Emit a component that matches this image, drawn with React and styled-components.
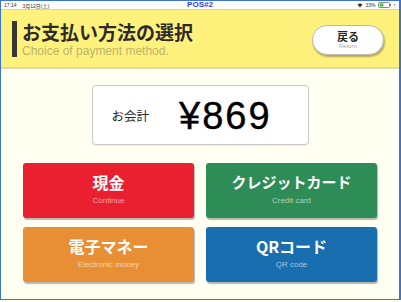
import React from 'react'
import styled, { createGlobalStyle } from 'styled-components'

const GlobalStyle = createGlobalStyle`
  html, body {
    margin: 0;
    padding: 0;
    background: #fffff2;
  }
  body {
    font-family: "Liberation Sans", "Noto Sans CJK JP", sans-serif;
  }
`

const Frame = styled.div`
  width: 398px;
  height: 298px;
  border: 1px solid #3d74d0;
  border-right-width: 2px;
  display: flex;
  flex-direction: column;
  background: #fffff2;
  overflow: hidden;
`

const StatusBar = styled.div`
  height: 8px;
  background: #fff;
  border-bottom: 1px solid #cfcfcf;
  position: relative;
  display: flex;
  align-items: center;
  padding: 0 3px;
  font-size: 5px;
  color: #333;
`

const StatusLeft = styled.div`
  display: flex;
  gap: 6px;
`

const StatusTitle = styled.div`
  position: absolute;
  left: 0;
  right: 0;
  top: 0;
  text-align: center;
  font-size: 8px;
  line-height: 8px;
  font-weight: bold;
  color: #2a3cf5;
`

const StatusRight = styled.div`
  margin-left: auto;
  display: flex;
  align-items: center;
  gap: 2px;
  font-size: 5px;
`

const Header = styled.header`
  height: 57px;
  background: #fff27c;
  border-bottom: 2px solid #dcd8b0;
  display: flex;
  align-items: center;
  padding: 0 15px 0 11px;
`

const Bar = styled.div`
  width: 5px;
  height: 36px;
  background: #3b3434;
  margin-top: 1px;
`

const TitleBlock = styled.div`
  margin-left: 5px;
  display: flex;
  flex-direction: column;
  margin-top: 1px;
`

const Title = styled.h1`
  margin: 0;
  font-family: "Noto Sans CJK JP", sans-serif;
  font-size: 19px;
  line-height: 22px;
  font-weight: 700;
  color: #2e2a2a;
`

const Subtitle = styled.div`
  font-size: 12px;
  line-height: 14px;
  color: #b9b26a;
  margin-top: 1px;
`

const ReturnButton = styled.button`
  margin-left: auto;
  margin-top: 2px;
  width: 72px;
  height: 30px;
  border-radius: 15px;
  border: 1px solid #b9b9b9;
  background: #fff;
  box-shadow: 1px 2px 2px rgba(0, 0, 0, 0.3);
  display: flex;
  flex-direction: column;
  align-items: center;
  justify-content: center;
  padding: 0;
  font-family: "Noto Sans CJK JP", sans-serif;
`

const ReturnLabel = styled.span`
  font-size: 11px;
  line-height: 13px;
  font-weight: 700;
  color: #222;
`

const ReturnSub = styled.span`
  font-family: "Liberation Sans", sans-serif;
  font-size: 6px;
  line-height: 7px;
  color: #aaa;
`

const Main = styled.main`
  display: flex;
  flex-direction: column;
  align-items: center;
  padding-top: 16px;
`

const TotalBox = styled.div`
  box-sizing: border-box;
  width: 217px;
  height: 60px;
  background: #fff;
  border: 1px solid #c9c9c9;
  border-radius: 4px;
  box-shadow: 0 1px 1px rgba(0, 0, 0, 0.08);
  display: flex;
  align-items: center;
  padding-left: 19px;
`

const TotalLabel = styled.span`
  font-family: "Noto Sans CJK JP", sans-serif;
  font-size: 12.5px;
  color: #222;
`

const TotalAmount = styled.span`
  margin-left: 30px;
  font-family: "Liberation Sans", sans-serif;
  font-size: 38px;
  letter-spacing: 2px;
  color: #000;
  margin-top: 2px;
  -webkit-text-stroke: 0.4px #000;
`

const Grid = styled.div`
  margin-top: 18px;
  display: grid;
  grid-template-columns: 171px 171px;
  grid-auto-rows: 55px;
  column-gap: 12px;
  row-gap: 9px;
`

const PayButton = styled.button`
  background: ${(p) => p.color};
  border: none;
  border-radius: 3px;
  box-shadow: 1px 2px 1px rgba(0, 0, 0, 0.28);
  display: flex;
  flex-direction: column;
  align-items: center;
  justify-content: center;
  padding: 0 0 3px;
  color: #fff;
`

const PayLabel = styled.span`
  font-family: "Noto Sans CJK JP", sans-serif;
  font-size: ${(p) => p.size || 16}px;
  line-height: 20px;
  font-weight: 700;
`

const PaySub = styled.span`
  font-family: "Liberation Sans", sans-serif;
  font-size: 8px;
  line-height: 10px;
  margin-top: 4px;
  color: rgba(255, 255, 255, 0.6);
`

const methods = [
  { label: '現金', sub: 'Continue', color: '#ea2030' },
  { label: 'クレジットカード', sub: 'Credit card', color: '#2e8c57', size: 15 },
  { label: '電子マネー', sub: 'Electronic money', color: '#e88f36' },
  { label: 'QRコード', sub: 'QR code', color: '#186eae' },
]

const Wifi = () => (
  <svg width="6" height="5" viewBox="0 0 12 10">
    <path d="M6 9 L1 3 Q6 -1 11 3 Z" fill="#333" />
  </svg>
)

const Battery = () => (
  <svg width="14" height="6" viewBox="0 0 14 6">
    <rect x="0.5" y="0.5" width="11" height="5" rx="1" fill="none" stroke="#888" />
    <rect x="1.5" y="1.5" width="4" height="3" fill="#3cc83c" />
    <rect x="12" y="2" width="1" height="2" fill="#888" />
  </svg>
)

export default function App() {
  return (
    <>
      <GlobalStyle />
      <Frame>
        <StatusBar>
          <StatusLeft>
            <span>17:14</span>
            <span>3月12日(土)</span>
          </StatusLeft>
          <StatusTitle>POS#2</StatusTitle>
          <StatusRight>
            <Wifi />
            <span>33%</span>
            <Battery />
            <span>↑</span>
          </StatusRight>
        </StatusBar>
        <Header>
          <Bar />
          <TitleBlock>
            <Title>お支払い方法の選択</Title>
            <Subtitle>Choice of payment method.</Subtitle>
          </TitleBlock>
          <ReturnButton>
            <ReturnLabel>戻る</ReturnLabel>
            <ReturnSub>Return</ReturnSub>
          </ReturnButton>
        </Header>
        <Main>
          <TotalBox>
            <TotalLabel>お会計</TotalLabel>
            <TotalAmount>¥869</TotalAmount>
          </TotalBox>
          <Grid>
            {methods.map((m) => (
              <PayButton key={m.sub} color={m.color}>
                <PayLabel size={m.size}>{m.label}</PayLabel>
                <PaySub>{m.sub}</PaySub>
              </PayButton>
            ))}
          </Grid>
        </Main>
      </Frame>
    </>
  )
}
